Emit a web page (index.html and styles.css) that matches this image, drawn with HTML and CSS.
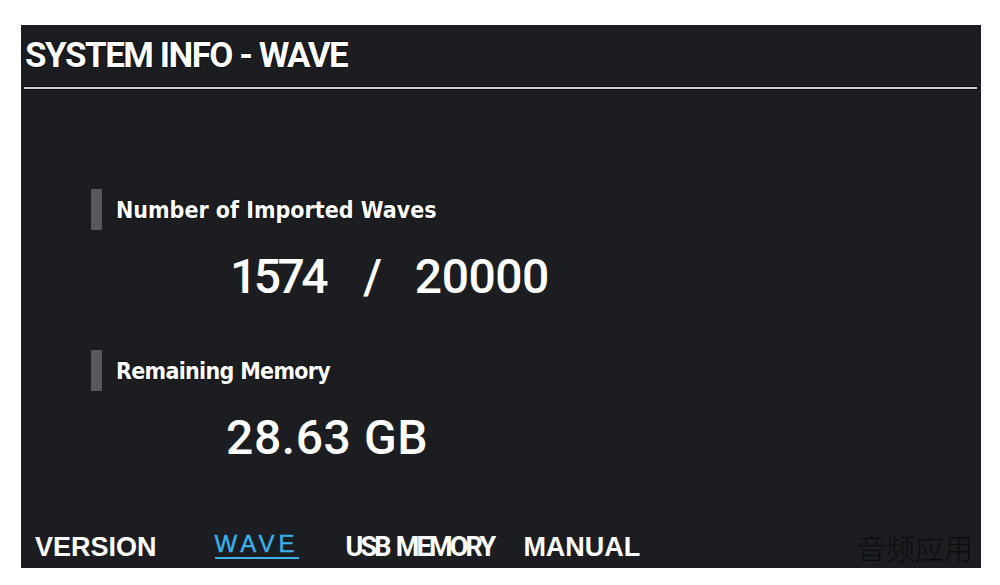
FILE: index.html
```html
<!DOCTYPE html>
<html>
<head>
<meta charset="utf-8">
<link rel="stylesheet" href="styles.css">
</head>
<body>
<div class="panel">
  <div class="header">SYSTEM INFO - WAVE</div>
  <div class="rule"></div>
  <div class="section first">
    <div class="label-row"><span class="bar"></span><span class="label">Number of Imported Waves</span></div>
    <div class="value"><span class="count">1574</span><span class="slash">/</span><span class="total">20000</span></div>
  </div>
  <div class="section second">
    <div class="label-row"><span class="bar"></span><span class="label label2">Remaining Memory</span></div>
    <div class="value value2">28.63 GB</div>
  </div>
  <div class="tabs">
    <span class="tab t-version">VERSION</span>
    <span class="tab t-wave">WAVE</span>
    <span class="tab t-usb">USB MEMORY</span>
    <span class="tab t-manual">MANUAL</span>
  </div>
  <div class="watermark">音频应用</div>
</div>
</body>
</html>
```
FILE: styles.css
```css
html, body {
  margin: 0;
  padding: 0;
  background: #ffffff;
  width: 1000px;
  height: 585px;
  overflow: hidden;
}
.panel {
  position: relative;
  margin: 25px 0 0 21px;
  width: 960px;
  height: 543px;
  background: #1b1d21;
  display: flex;
  flex-direction: column;
  color: #ffffff;
}
.header {
  font-family: Roboto, "Liberation Sans", sans-serif;
  font-weight: 700;
  font-size: 35px;
  line-height: 35px;
  letter-spacing: -1.5px;
  padding: 13px 0 0 4px;
  height: 35px;
  text-shadow: 0 0 2px #000, 0 0 1px #000;
}
.rule {
  margin: 14px 4px 0 3px;
  height: 2px;
  background: #d0d0d0;
  box-shadow: 0 -1px 0 #0a0b0d, 0 1px 0 #0a0b0d;
}
.section {
  display: flex;
  flex-direction: column;
}
.section.first { margin-top: 100px; }
.section.second { margin-top: 49px; }
.label-row {
  display: flex;
  align-items: center;
  padding-left: 70px;
}
.bar {
  width: 11px;
  height: 41px;
  background: #55585d;
  border-radius: 1px;
}
.label {
  margin-left: 14px;
  font-family: "DejaVu Sans Condensed", "DejaVu Sans", sans-serif;
  font-stretch: condensed;
  font-weight: 700;
  font-size: 23px;
  line-height: 26px;
  text-shadow: 0 0 2px #000;
}
.label2 { letter-spacing: -0.7px; }
.value {
  margin-top: 23px;
  padding-left: 206px;
  font-family: Roboto, "Liberation Sans", sans-serif;
  font-weight: 500;
  font-size: 48px;
  line-height: 48px;
  height: 48px;
  display: flex;
}
.value .count { margin-left: 3px; letter-spacing: -3.5px; }
.value .slash { margin-left: 38px; }
.value .total { margin-left: 33px; letter-spacing: -0.5px; }
.value2 { padding-left: 205px; letter-spacing: 0.6px; }
.tabs {
  margin-top: auto;
  padding: 0 0 5px 14px;
  display: flex;
  align-items: baseline;
  font-family: "Liberation Sans", Arial, sans-serif;
  font-weight: 700;
  font-size: 27px;
  line-height: 27px;
}
.t-wave {
  margin-left: 58px;
  font-weight: 400;
  font-size: 24px;
  color: #3bb0ea;
  letter-spacing: 4px;
  position: relative;
  top: -4px;
  border-bottom: 2px solid #3bb0ea;
  padding: 0 0 1px 0;
  line-height: 24px;
  -webkit-text-stroke: 0.4px #3bb0ea;
}
.t-usb {
  margin-left: 47px;
  font-family: Roboto, "Liberation Sans", sans-serif;
  letter-spacing: -2.8px;
  word-spacing: 3px;
}
.t-manual { margin-left: 30px; }
.watermark {
  position: absolute;
  right: 8px;
  bottom: 5px;
  font-family: "Noto Sans CJK SC", sans-serif;
  font-weight: 300;
  font-size: 29px;
  line-height: 32px;
  color: #0b0c0e;
}
```
